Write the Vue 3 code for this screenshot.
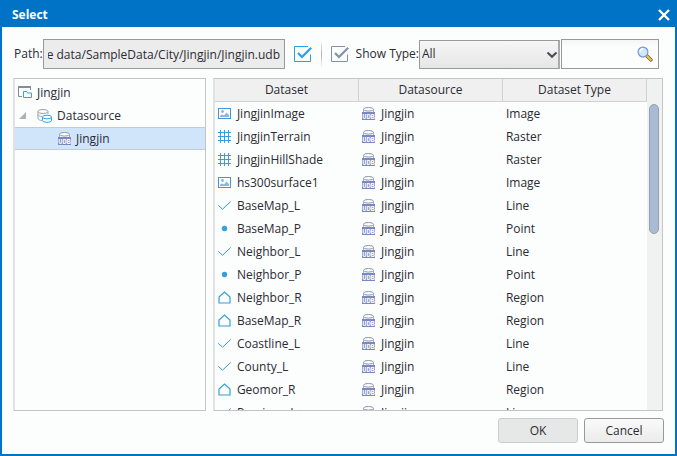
<script setup>
import { h, onMounted, ref } from 'vue'

const path = ref('D:/Sample data/SampleData/City/Jingjin/Jingjin.udb')
const pathInput = ref(null)
const showType = ref('All')
const search = ref('')

const rows = [
  ['JingjinImage', 'Image'],
  ['JingjinTerrain', 'Raster'],
  ['JingjinHillShade', 'Raster'],
  ['hs300surface1', 'Image'],
  ['BaseMap_L', 'Line'],
  ['BaseMap_P', 'Point'],
  ['Neighbor_L', 'Line'],
  ['Neighbor_P', 'Point'],
  ['Neighbor_R', 'Region'],
  ['BaseMap_R', 'Region'],
  ['Coastline_L', 'Line'],
  ['County_L', 'Line'],
  ['Geomor_R', 'Region'],
  ['Province_L', 'Line'],
].map(([name, type]) => ({ name, type, source: 'Jingjin' }))

// Database cylinder behind a UDB tag
const UdbIcon = () =>
  h('svg', { width: 13, height: 13, viewBox: '0 0 13 13' }, [
    h('path', { d: 'M1.5 2.500v3h10v-3', stroke: '#a3aec0', fill: '#fff' }),
    h('ellipse', { cx: 6.5, cy: 2.3, rx: 5, ry: 1.8, fill: '#fff', stroke: '#8795ab' }),
    h('rect', { y: 5, width: 13, height: 8, fill: '#7b88c0' }),
    h('text', {
      x: 6.5,
      y: 12,
      'text-anchor': 'middle',
      'font-family': 'Liberation Mono, monospace',
      'font-size': 7,
      'font-weight': 700,
      fill: '#fff',
    }, 'UDB'),
  ])

// Keep the file name, at the end of the path, in view
onMounted(() => {
  pathInput.value.scrollLeft = pathInput.value.scrollWidth
})
</script>

<template>
  <svg class="defs" aria-hidden="true">
    <symbol id="i-image" viewBox="0 0 13 13">
      <rect x=".5" y="1.5" width="12" height="10" fill="#fff" stroke="#4b93cf" />
      <circle cx="4.5" cy="4.5" r="1.4" fill="#8fb3dc" />
      <path d="M2 10V8.500l2-1 2 1 2.500-3L11 8v2z" fill="#8fb3dc" />
    </symbol>
    <symbol id="i-raster" viewBox="0 0 13 13">
      <path d="M2.500 0v13M6.500 0v13M10.500 0v13M0 2.500h13M0 6.500h13M0 10.500h13" stroke="#34a0dc" fill="none" />
    </symbol>
    <symbol id="i-line" viewBox="0 0 13 13">
      <path d="M.3 6.300 4.500 10.200 12.700 2.500" stroke="#2f98d6" fill="none" />
    </symbol>
    <symbol id="i-point" viewBox="0 0 13 13">
      <circle cx="6.500" cy="6.500" r="2.700" fill="#34a0dc" />
    </symbol>
    <symbol id="i-region" viewBox="0 0 13 13">
      <path d="M1 12V6L6.500 1 12 6v6z" stroke="#34a0dc" stroke-width="1.200" fill="none" />
    </symbol>
    <symbol id="i-check" viewBox="0 0 18 18">
      <path d="M14 1.500H.500v15h16V9.500" stroke="currentColor" fill="none" />
      <path d="M4 8l4 4 9.200-9.200" stroke="currentColor" stroke-width="2.200" fill="none" />
    </symbol>
  </svg>

  <section class="dialog" role="dialog" aria-label="Select">
    <header class="titlebar">
      <h1>Select</h1>
      <button class="close" type="button" aria-label="Close">
        <svg width="12" height="12" viewBox="0 0 12 12"><path d="M1 1l10 10M11 1L1 11" stroke="#fff" stroke-width="2.400" /></svg>
      </button>
    </header>

    <main class="content">
      <div class="toolbar">
        <label for="path">Path:</label>
        <input id="path" ref="pathInput" class="path" :value="path" readonly />
        <button class="tool on" type="button" aria-label="Select all"><svg width="18" height="18"><use href="#i-check" /></svg></button>
        <span class="sep"></span>
        <button class="tool" type="button" aria-label="Invert selection"><svg width="18" height="18"><use href="#i-check" /></svg></button>
        <label for="type">Show Type:</label>
        <div class="pick">
          <select id="type" v-model="showType"><option>All</option></select>
          <svg class="arrow" width="12" height="8" viewBox="0 0 12 8"><path d="M1.500 1.500L6 5.800l4.500-4.300" stroke="#4b4d50" stroke-width="2.200" fill="none" /></svg>
        </div>
        <div class="search">
          <input v-model="search" type="text" aria-label="Search" />
          <svg width="16" height="16" viewBox="0 0 16 16">
            <path d="M9.500 9.500l4.300 4.300" stroke="#6b5a3c" stroke-width="3.600" stroke-linecap="round" />
            <path d="M10.300 10.300l3.400 3.400" stroke="#f3bd45" stroke-width="2.300" stroke-linecap="round" />
            <circle cx="6" cy="6" r="4.900" fill="#cfe6fb" stroke="#6f9bd2" stroke-width="1.200" />
            <path d="M3 6a3 3 0 0 1 3-3" stroke="#fff" stroke-width="1.300" fill="none" />
          </svg>
        </div>
      </div>

      <div class="panels">
        <nav class="panel tree" aria-label="Datasources">
          <ul>
            <li class="root">
              <svg width="14" height="13" viewBox="0 0 14 13">
                <path d="M4 10.500H.5V1M12.500 4V1" stroke="#7f8ca3" fill="none" />
                <path d="M0 1h13" stroke="#7f8ca3" stroke-width="2" />
                <path d="M5.500 11.500v-6h3l1 1.500h4v4.500z" stroke="#34a0dc" fill="#fcfdfd" />
              </svg>
              Jingjin
            </li>
            <li class="group">
              <svg width="7" height="7" viewBox="0 0 7 7"><path d="M7 0v7H0z" fill="#b0b0b0" /></svg>
              <svg class="db" width="15" height="14" viewBox="0 0 15 14">
                <g fill="none" stroke="#98a3b3">
                  <ellipse cx="6" cy="2.500" rx="5" ry="2" />
                  <path d="M1 2.500v3c0 1 2 2 4 2M11 2.500v2.500M1 5.500v4c0 1 2 2 4 2" />
                </g>
                <g fill="#fcfdfd" stroke="#34a0dc">
                  <path d="M5.500 8v3.500c0 2.400 9 2.400 9 0V8" />
                  <ellipse cx="10" cy="8" rx="4.500" ry="1.800" />
                </g>
              </svg>
              Datasource
            </li>
            <li class="leaf selected">
              <UdbIcon />
              Jingjin
            </li>
          </ul>
        </nav>

        <div class="panel list">
          <div class="viewport">
            <table>
              <thead>
                <tr><th>Dataset</th><th>Datasource</th><th>Dataset Type</th></tr>
              </thead>
              <tbody>
                <tr v-for="row in rows" :key="row.name">
                  <td><span class="cell"><svg width="13" height="13"><use :href="'#i-' + row.type.toLowerCase()" /></svg>{{ row.name }}</span></td>
                  <td><span class="cell"><UdbIcon />{{ row.source }}</span></td>
                  <td>{{ row.type }}</td>
                </tr>
              </tbody>
            </table>
          </div>
          <div class="scrollbar"><div class="thumb"></div></div>
        </div>
      </div>

      <footer class="actions">
        <button type="button" class="ok" disabled>OK</button>
        <button type="button">Cancel</button>
      </footer>
    </main>
  </section>
</template>

<style>
body {
  margin: 0;
}
</style>

<style scoped>
.defs {
  position: absolute;
  width: 0;
  height: 0;
}

.dialog {
  box-sizing: border-box;
  height: 100vh;
  display: flex;
  flex-direction: column;
  border: solid #0173c7;
  border-width: 0 2px 2px;
  background: #fcfdfd;
  color: #2b2b33;
  font: 12px/16px "Open Sans", "Noto Sans", sans-serif;
}

button,
input,
select {
  font: inherit;
  color: inherit;
  box-sizing: border-box;
}

svg {
  flex: none;
  display: block;
}

.titlebar {
  display: flex;
  align-items: center;
  justify-content: space-between;
  height: 27px;
  padding: 2px 5px 0 10px;
  box-sizing: border-box;
  background: #0173c7;
}

h1 {
  margin: 0;
  font-size: 12px;
  font-weight: 700;
  color: #fff;
}

.close,
.tool {
  display: block;
  padding: 0;
  border: 0;
  background: none;
}

.content {
  flex: 1;
  min-height: 0;
  display: flex;
  flex-direction: column;
  padding: 12px 12px 11px 11px;
}

.toolbar {
  display: flex;
  align-items: center;
  height: 30px;
  padding: 0 4px 0 1px;
}

.toolbar label {
  white-space: nowrap;
}

.path {
  flex: 1;
  min-width: 0;
  height: 30px;
  padding: 0 4px;
  border: 1px solid #999;
  background: #ececec;
  outline: 0;
}

.tool {
  color: #8391a8;
}

.tool.on {
  margin-left: 9px;
  color: #2a9fe0;
}

.sep {
  width: 1px;
  height: 28px;
  margin: 0 9px;
  background: linear-gradient(#fcfdfd, #b0b0b0, #fcfdfd);
}

.tool + label {
  margin-left: 7px;
}

.pick {
  position: relative;
  width: 141px;
  margin-right: 1px;
}

select {
  display: block;
  width: 100%;
  height: 29px;
  padding: 0 2px;
  border: 1px solid #999;
  border-right: 2px solid #aaa;
  border-radius: 0;
  appearance: none;
  background: linear-gradient(#f6f6f6, #e6e6e6);
}

.arrow {
  position: absolute;
  right: 2px;
  top: 11px;
  pointer-events: none;
}

.search {
  display: flex;
  align-items: center;
  box-sizing: border-box;
  width: 98px;
  height: 30px;
  padding: 0 5px;
  border: 1px solid #999;
  background: linear-gradient(#f5f5f5, #fcfdfd 8px);
}

.search input {
  flex: 1;
  min-width: 0;
  height: 100%;
  padding: 0;
  border: 0;
  background: none;
  outline: 0;
}

.panels {
  flex: 1;
  min-height: 0;
  display: grid;
  grid-template-columns: 3fr 7fr;
  gap: 7px;
  margin-top: 9px;
}

.panel {
  min-height: 0;
  box-sizing: border-box;
  overflow: hidden;
  border: 1px solid #c4c4c4;
  border-left: 2px solid #e2e2e2;
}

ul {
  margin: 0;
  padding: 2px 0 0;
  list-style: none;
}

li {
  display: flex;
  align-items: center;
  gap: 5px;
  box-sizing: border-box;
  height: 23px;
}

.root {
  padding-left: 3px;
}

.group {
  padding-left: 4px;
}

.db {
  margin-left: 6px;
}

.leaf {
  padding-left: 43px;
}

.selected {
  border: solid #c3cbd6;
  border-width: 1px 0;
  background: #d0e4fa;
}

.list {
  display: flex;
}

.viewport {
  flex: 1;
  min-width: 0;
  overflow: hidden;
}

table {
  width: 100%;
  table-layout: fixed;
  border-collapse: separate;
  border-spacing: 0;
}

th {
  height: 22px;
  padding: 0;
  border: solid #d2d2d2;
  border-width: 0 1px 1px 0;
  background: #f0f0f0;
  font-weight: 400;
}

td {
  height: 23px;
  padding: 0 3px;
}

.cell {
  display: flex;
  align-items: center;
  gap: 6px;
}

.scrollbar {
  width: 15px;
  box-sizing: border-box;
  padding: 25px 3px 0 2px;
  background: #f0f1f1;
}

.thumb {
  height: 130px;
  box-sizing: border-box;
  border: 1px solid #9aa0aa;
  border-radius: 5px;
  background: #a8bad4;
}

.actions {
  display: flex;
  justify-content: flex-end;
  gap: 6px;
  margin-top: 7px;
  margin-right: -1px;
}

.actions button {
  width: 80px;
  height: 25px;
  padding: 0;
  border: 1px solid #999;
  border-radius: 3px;
  background: linear-gradient(#fafafa, #ebebeb);
}

.actions .ok {
  border-color: #ccc;
  background: #e6e7e7;
}
</style>
